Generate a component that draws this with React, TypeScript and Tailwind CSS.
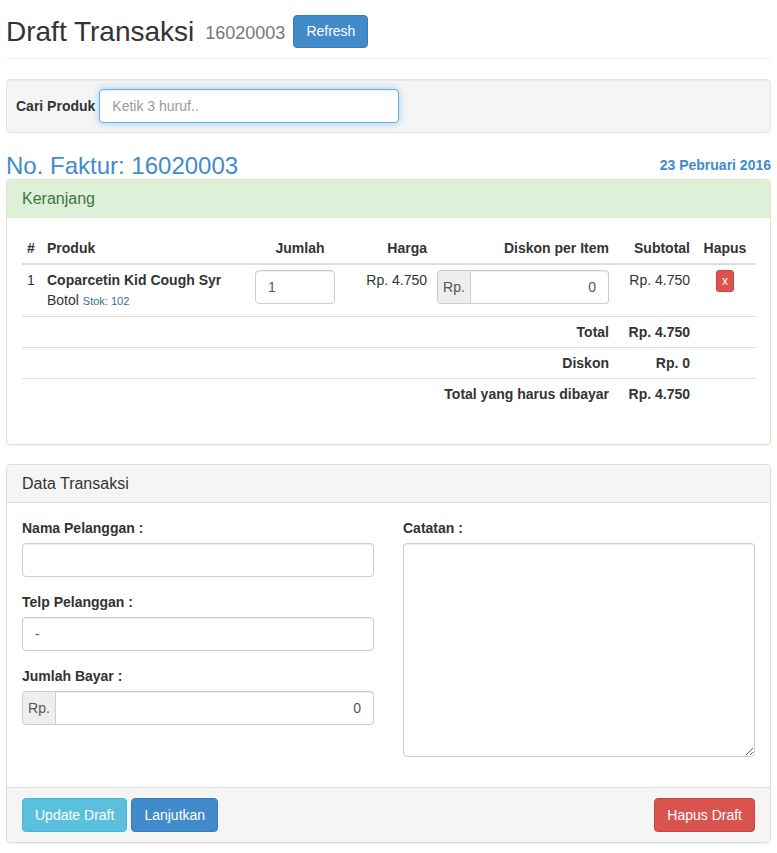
import React from "react";

// 入力欄の共通スタイル
const inputCls =
  "h-[34px] w-full rounded-[4px] border border-[#ccc] bg-white px-3 text-[14px] text-[#555] shadow-[inset_0_1px_1px_rgba(0,0,0,0.075)] outline-none";

function AddonInput({ value }: { value: string }) {
  return (
    <div className="flex h-[34px] w-full">
      <span className="flex w-[34px] shrink-0 items-center justify-center rounded-l-[4px] border border-[#ccc] bg-[#eee] text-[14px] text-[#555]">
        Rp.
      </span>
      <input
        className="h-[34px] w-full min-w-0 rounded-r-[4px] border border-l-0 border-[#ccc] bg-white px-3 text-right text-[14px] text-[#555] shadow-[inset_0_1px_1px_rgba(0,0,0,0.075)] outline-none"
        defaultValue={value}
      />
    </div>
  );
}

export default function App() {
  const th = "px-[5px] pt-[5px] pb-[5px] leading-[20px] font-bold border-b-2 border-[#ddd]";
  const td = "px-[5px] py-[5px] leading-[20px] align-top border-t border-[#ddd]";

  return (
    <div
      className="min-h-screen bg-white px-[6px] text-[14px] text-[#333]"
      style={{ fontFamily: '"Liberation Sans", Arial, sans-serif' }}
    >
      {/* ヘッダー */}
      <div className="flex h-[48px] items-end pb-0">
        <div className="flex h-[33px] items-center">
          <h1 className="text-[28px] leading-[33px]">Draft Transaksi</h1>
          <span className="ml-[11px] mt-[4px] text-[18px] text-[#777]">16020003</span>
          <button className="ml-[8px] h-[33px] rounded-[4px] border border-[#357ebd] bg-[#428bca] px-[12px] text-[14px] text-white">
            Refresh
          </button>
        </div>
      </div>
      <hr className="mt-[10px] border-t border-[#eee]" />

      {/* 商品検索 */}
      <div className="mt-[20px] flex items-center rounded-[4px] border border-[#e3e3e3] bg-[#f5f5f5] p-[9px] shadow-[inset_0_1px_1px_rgba(0,0,0,0.05)]">
        <label className="font-bold">Cari Produk</label>
        <input
          className="ml-[4px] h-[34px] w-[300px] rounded-[4px] border border-[#66afe9] bg-white px-3 text-[14px] shadow-[inset_0_1px_1px_rgba(0,0,0,0.075),0_0_8px_rgba(102,175,233,0.6)] outline-none placeholder:text-[#999]"
          placeholder="Ketik 3 huruf.."
        />
      </div>

      {/* 請求番号 */}
      <div className="mt-[20px] flex h-[26px] items-center justify-between">
        <h3 className="text-[24px] leading-[28px] text-[#428bca]">No. Faktur: 16020003</h3>
        <span className="mb-[2px] font-bold text-[#428bca]">23 Pebruari 2016</span>
      </div>

      {/* カート */}
      <div className="rounded-[4px] border border-[#d6e9c6] bg-white shadow-[0_1px_1px_rgba(0,0,0,0.05)]">
        <div className="flex h-[38px] items-center rounded-t-[3px] border-b border-[#d6e9c6] bg-[#dff0d8] px-[15px] text-[16px] text-[#3c763d]">
          Keranjang
        </div>
        <div className="p-[15px]">
          <table className="mb-[20px] w-full table-fixed border-collapse">
            <colgroup>
              <col className="w-[20px]" />
              <col className="w-[208px]" />
              <col className="w-[100px]" />
              <col className="w-[82px]" />
              <col className="w-[182px]" />
              <col className="w-[81px]" />
              <col className="w-[60px]" />
            </colgroup>
            <thead>
              <tr>
                <th className={`${th} text-left`}>#</th>
                <th className={`${th} text-left`}>Produk</th>
                <th className={`${th} text-center`}>Jumlah</th>
                <th className={`${th} text-right`}>Harga</th>
                <th className={`${th} text-right`}>Diskon per Item</th>
                <th className={`${th} text-right`}>Subtotal</th>
                <th className={`${th} text-center`}>Hapus</th>
              </tr>
            </thead>
            <tbody>
              <tr>
                <td className={`${td} border-t-0`}>1</td>
                <td className={`${td} border-t-0`}>
                  <div className="font-bold">Coparcetin Kid Cough Syr</div>
                  <div>
                    Botol <span className="text-[11px] text-[#31708f]">Stok: 102</span>
                  </div>
                </td>
                <td className={`${td} border-t-0`}>
                  <input className={`${inputCls} !w-[80px]`} defaultValue="1" />
                </td>
                <td className={`${td} border-t-0 text-right`}>Rp. 4.750</td>
                <td className={`${td} border-t-0`}>
                  <AddonInput value="0" />
                </td>
                <td className={`${td} border-t-0 text-right`}>Rp. 4.750</td>
                <td className={`${td} border-t-0 text-center`}>
                  <button className="h-[22px] w-[18px] rounded-[3px] border border-[#d43f3a] bg-[#d9534f] text-[12px] leading-[18px] text-white">
                    x
                  </button>
                </td>
              </tr>
              <tr>
                <td colSpan={5} className={`${td} text-right font-bold`}>Total</td>
                <td className={`${td} text-right font-bold`}>Rp. 4.750</td>
                <td className={td}></td>
              </tr>
              <tr>
                <td colSpan={5} className={`${td} text-right font-bold`}>Diskon</td>
                <td className={`${td} text-right font-bold`}>Rp. 0</td>
                <td className={td}></td>
              </tr>
              <tr>
                <td colSpan={5} className={`${td} text-right font-bold`}>Total yang harus dibayar</td>
                <td className={`${td} text-right font-bold`}>Rp. 4.750</td>
                <td className={td}></td>
              </tr>
            </tbody>
          </table>
        </div>
      </div>

      {/* 取引データ */}
      <div className="mt-[19px] mb-[10px] rounded-[4px] border border-[#ddd] bg-white shadow-[0_1px_1px_rgba(0,0,0,0.05)]">
        <div className="flex h-[38px] items-center rounded-t-[3px] border-b border-[#ddd] bg-[#f5f5f5] px-[15px] text-[16px] text-[#333]">
          Data Transaksi
        </div>
        <div className="grid grid-cols-2 gap-x-[29px] p-[15px]">
          <div>
            <div className="mb-[15px]">
              <label className="mb-[5px] block font-bold leading-[20px]">Nama Pelanggan :</label>
              <input className={inputCls} />
            </div>
            <div className="mb-[15px]">
              <label className="mb-[5px] block font-bold leading-[20px]">Telp Pelanggan :</label>
              <input className={inputCls} defaultValue="-" />
            </div>
            <div className="mb-[15px]">
              <label className="mb-[5px] block font-bold leading-[20px]">Jumlah Bayar :</label>
              <AddonInput value="0" />
            </div>
          </div>
          <div>
            <div className="mb-[15px]">
              <label className="mb-[5px] block font-bold leading-[20px]">Catatan :</label>
              <textarea className="block h-[214px] w-full rounded-[4px] border border-[#ccc] bg-white px-3 py-[6px] text-[14px] shadow-[inset_0_1px_1px_rgba(0,0,0,0.075)] outline-none" />
            </div>
          </div>
        </div>
        <div className="flex items-center justify-between rounded-b-[3px] border-t border-[#ddd] bg-[#f5f5f5] px-[15px] py-[10px]">
          <div className="flex gap-[4px]">
            <button className="h-[34px] rounded-[4px] border border-[#46b8da] bg-[#5bc0de] px-[12px] text-white">
              Update Draft
            </button>
            <button className="h-[34px] rounded-[4px] border border-[#357ebd] bg-[#428bca] px-[12px] text-white">
              Lanjutkan
            </button>
          </div>
          <button className="h-[34px] rounded-[4px] border border-[#d43f3a] bg-[#d9534f] px-[12px] text-white">
            Hapus Draft
          </button>
        </div>
      </div>
    </div>
  );
}
